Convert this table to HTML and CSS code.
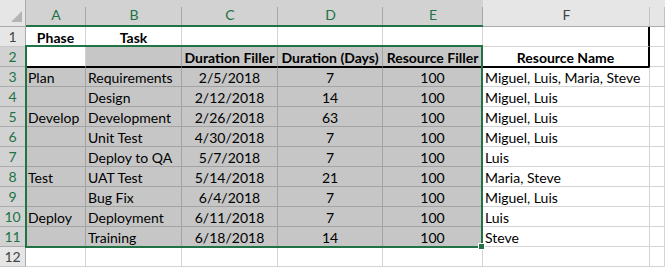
FILE: index.html
```html
<!DOCTYPE html>
<html>
<head>
<meta charset="utf-8">
<link rel="stylesheet" href="styles.css">
</head>
<body>
<div class="sheet">
  <div class="corner"><svg width="26" height="27" viewBox="0 0 26 27"><polygon points="22,11 22,22 11,22" fill="#b4b4b4"/></svg></div>
  <div class="ch sel">A</div>
  <div class="ch sel">B</div>
  <div class="ch sel">C</div>
  <div class="ch sel">D</div>
  <div class="ch sel">E</div>
  <div class="ch">F</div>
  <div class="ch"></div>

  <div class="rh">1</div>
  <div class="c b ctr">Phase</div>
  <div class="c b ctr">Task</div>
  <div class="c"></div>
  <div class="c"></div>
  <div class="c"></div>
  <div class="c fr"></div>
  <div class="c"></div>

  <div class="rh sel">2</div>
  <div class="c bk"></div>
  <div class="c s bk"></div>
  <div class="c s bk b ctr">Duration Filler</div>
  <div class="c s bk b ctr">Duration (Days)</div>
  <div class="c s bk b ctr">Resource Filler</div>
  <div class="c bk fr b ctr">Resource Name</div>
  <div class="c"></div>

  <div class="rh sel">3</div>
  <div class="c s tb">Plan</div>
  <div class="c s tb">Requirements</div>
  <div class="c s tb ctr">2/5/2018</div>
  <div class="c s tb ctr">7</div>
  <div class="c s tb ctr">100</div>
  <div class="c tb">Miguel, Luis, Maria, Steve</div>
  <div class="c"></div>

  <div class="rh sel">4</div>
  <div class="c s"></div>
  <div class="c s">Design</div>
  <div class="c s ctr">2/12/2018</div>
  <div class="c s ctr">14</div>
  <div class="c s ctr">100</div>
  <div class="c">Miguel, Luis</div>
  <div class="c"></div>

  <div class="rh sel">5</div>
  <div class="c s">Develop</div>
  <div class="c s">Development</div>
  <div class="c s ctr">2/26/2018</div>
  <div class="c s ctr">63</div>
  <div class="c s ctr">100</div>
  <div class="c">Miguel, Luis</div>
  <div class="c"></div>

  <div class="rh sel">6</div>
  <div class="c s"></div>
  <div class="c s">Unit Test</div>
  <div class="c s ctr">4/30/2018</div>
  <div class="c s ctr">7</div>
  <div class="c s ctr">100</div>
  <div class="c">Miguel, Luis</div>
  <div class="c"></div>

  <div class="rh sel">7</div>
  <div class="c s"></div>
  <div class="c s">Deploy to QA</div>
  <div class="c s ctr">5/7/2018</div>
  <div class="c s ctr">7</div>
  <div class="c s ctr">100</div>
  <div class="c">Luis</div>
  <div class="c"></div>

  <div class="rh sel">8</div>
  <div class="c s">Test</div>
  <div class="c s">UAT Test</div>
  <div class="c s ctr">5/14/2018</div>
  <div class="c s ctr">21</div>
  <div class="c s ctr">100</div>
  <div class="c">Maria, Steve</div>
  <div class="c"></div>

  <div class="rh sel">9</div>
  <div class="c s"></div>
  <div class="c s">Bug Fix</div>
  <div class="c s ctr">6/4/2018</div>
  <div class="c s ctr">7</div>
  <div class="c s ctr">100</div>
  <div class="c">Miguel, Luis</div>
  <div class="c"></div>

  <div class="rh sel">10</div>
  <div class="c s">Deploy</div>
  <div class="c s">Deployment</div>
  <div class="c s ctr">6/11/2018</div>
  <div class="c s ctr">7</div>
  <div class="c s ctr">100</div>
  <div class="c">Luis</div>
  <div class="c"></div>

  <div class="rh sel">11</div>
  <div class="c s"></div>
  <div class="c s">Training</div>
  <div class="c s ctr">6/18/2018</div>
  <div class="c s ctr">14</div>
  <div class="c s ctr">100</div>
  <div class="c">Steve</div>
  <div class="c"></div>

  <div class="rh">12</div>
  <div class="c"></div>
  <div class="c"></div>
  <div class="c"></div>
  <div class="c"></div>
  <div class="c"></div>
  <div class="c"></div>
  <div class="c"></div>

  <div class="selection"></div>
  <div class="handle"></div>
</div>
</body>
</html>
```

FILE: styles.css
```css
html, body {
  margin: 0;
  padding: 0;
  background: #ffffff;
}

.sheet {
  position: relative;
  display: grid;
  grid-template-columns: 26px 60px 96px 96px 105px 100px 167px 1fr;
  grid-template-rows: 27px repeat(12, 20px);
  width: 665px;
  height: 268px;
  overflow: hidden;
  font-family: "Lato", "Liberation Sans", sans-serif;
  font-size: 14px;
  color: #000000;
}

.sheet > div {
  box-sizing: border-box;
  white-space: nowrap;
  overflow: hidden;
}

.corner {
  background: #e6e6e6;
  border-right: 1px solid #ababab;
  border-bottom: 1px solid #ababab;
}

.corner svg {
  display: block;
}

.ch {
  background: linear-gradient(#c2c2c2, #c2c2c2) right 7px / 1px calc(100% - 7px) no-repeat, #e6e6e6;
  border-bottom: 1px solid #ababab;
  color: #444444;
  display: flex;
  align-items: center;
  justify-content: center;
  padding-top: 2px;
}

.ch.sel {
  background: linear-gradient(#a8a8a8, #a8a8a8) right 7px / 1px calc(100% - 7px) no-repeat, #d2d2d2;
  color: #217346;
  border-bottom: 2px solid #217346;
  padding-top: 3px;
}

.rh {
  background: #e6e6e6;
  border-right: 1px solid #ababab;
  border-bottom: 1px solid #c6c6c6;
  color: #444444;
  display: flex;
  align-items: center;
  justify-content: center;
}

.rh.sel {
  background: #d2d2d2;
  color: #217346;
  border-right: 1px solid #217346;
  border-bottom-color: #ababab;
}

.c {
  background: #ffffff;
  border-right: 1px solid #d4d4d4;
  border-bottom: 1px solid #d4d4d4;
  display: flex;
  align-items: flex-end;
  line-height: 17px;
  padding-left: 2px;
}

.c.s {
  background: #c6c6c6;
  border-right-color: #a3a3a3;
  border-bottom-color: #a3a3a3;
}

.ctr {
  justify-content: center;
  padding-left: 0;
}

.b {
  font-weight: 700;
}

.c.bk {
  border-bottom: 1px solid #000000;
}

.c.tb {
  border-top: 1px solid #000000;
}

.c.fr {
  border-right: 2px solid #000000;
}

.selection {
  position: absolute;
  left: 25px;
  top: 45px;
  width: 458px;
  height: 203px;
  border: 2px solid #217346;
}

.handle {
  position: absolute;
  left: 478px;
  top: 243px;
  width: 7px;
  height: 7px;
  background: #217346;
  border: 1px solid #ffffff;
}
```
